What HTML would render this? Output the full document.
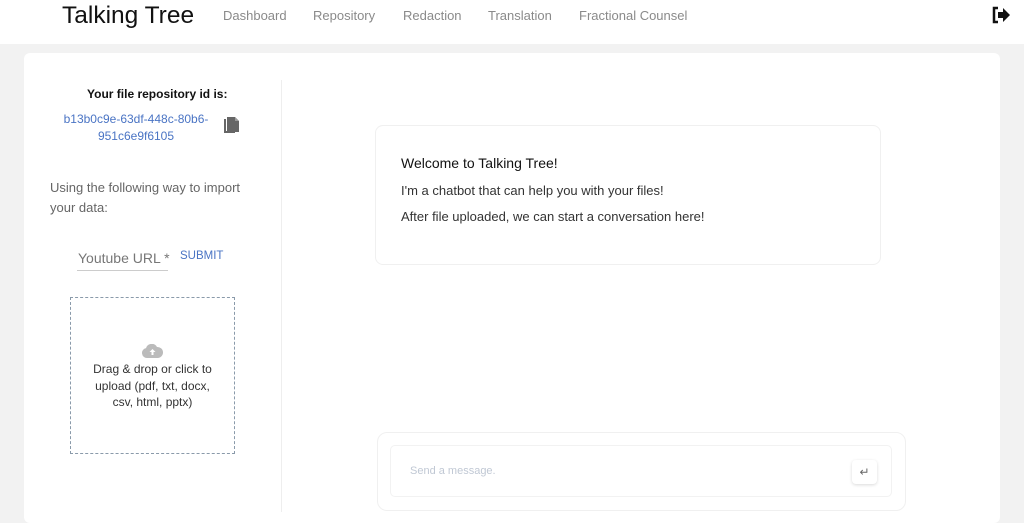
<!DOCTYPE html>
<html><head><style>
*{margin:0;padding:0;box-sizing:border-box}
body{width:1024px;height:512px;overflow:hidden;background:#f2f2f2;font-family:"Liberation Sans",sans-serif;position:relative}
.abs{position:absolute}
.hdr{left:0;top:0;width:1024px;height:44px;background:#fff}
.nav{top:8px;font-size:13px;color:#8a8a8a}
.card{left:24px;top:53px;width:976px;height:470px;background:#fff;border-radius:6px}
</style></head><body>
<div class="abs hdr"></div>
<div class="abs" style="left:62px;top:2px;font-size:24.5px;color:#111">Talking Tree</div>
<div class="abs nav" style="left:223px">Dashboard</div>
<div class="abs nav" style="left:313px">Repository</div>
<div class="abs nav" style="left:403px">Redaction</div>
<div class="abs nav" style="left:488px">Translation</div>
<div class="abs nav" style="left:579px">Fractional Counsel</div>
<svg class="abs" style="left:991px;top:6px" width="20" height="18" viewBox="0 0 20 18"><path d="M7 2H3v14h4" fill="none" stroke="#111" stroke-width="2.5"/><path d="M7 6h5V2l7 7-7 7v-4H7z" fill="#111"/></svg>
<div class="abs card"></div>
<div class="abs" style="left:281px;top:80px;width:1px;height:432px;background:#eee"></div>
<div class="abs" style="left:87px;top:87px;font-size:12px;font-weight:bold;color:#111">Your file repository id is:</div>
<div class="abs" style="left:60px;top:111px;width:152px;text-align:center;font-size:12px;line-height:17px;color:#4a74c4">b13b0c9e-63df-448c-80b6-951c6e9f6105</div>
<svg class="abs" style="left:223px;top:117px" width="17" height="18" viewBox="0 0 17 18"><path d="M1 2h2v12h9v2H1z" fill="#666"/><path d="M4 0h8l4 4v11H4z" fill="#666"/><path d="M12 0v4h4" fill="#999"/></svg>
<div class="abs" style="left:50px;top:178px;width:210px;font-size:13px;line-height:20px;color:#666">Using the following way to import your data:</div>
<div class="abs" style="left:78px;top:250px;font-size:14px;color:#777">Youtube URL *</div>
<div class="abs" style="left:77px;top:270px;width:91px;height:1px;background:#ccc"></div>
<div class="abs" style="left:180px;top:250px;font-size:11.5px;color:#4a74c4">SUBMIT</div>
<div class="abs" style="left:70px;top:297px;width:165px;height:157px;border:1.5px dashed #8a9aaa"></div>
<svg class="abs" style="left:142px;top:344px" width="21" height="14" viewBox="0 0 21 14"><path d="M5 14a5 5 0 0 1-1-9.9A6 6 0 0 1 15 3a5 5 0 0 1 1 11z" fill="#bbb"/><path d="M10.5 5l-3 3h2v3h2V8h2z" fill="#fff"/></svg>
<div class="abs" style="left:85px;top:361px;width:135px;text-align:center;font-size:12px;line-height:16.5px;color:#333">Drag &amp; drop or click to upload (pdf, txt, docx, csv, html, pptx)</div>
<div class="abs" style="left:375px;top:125px;width:506px;height:140px;border:1px solid #f0f0f0;border-radius:8px"></div>
<div class="abs" style="left:401px;top:155px;font-size:14px;color:#111">Welcome to Talking Tree!</div>
<div class="abs" style="left:401px;top:183px;font-size:13px;color:#333">I'm a chatbot that can help you with your files!</div>
<div class="abs" style="left:401px;top:209px;font-size:13px;color:#333">After file uploaded, we can start a conversation here!</div>
<div class="abs" style="left:377px;top:432px;width:529px;height:79px;border:1px solid #f0f0f0;border-radius:10px"></div>
<div class="abs" style="left:390px;top:445px;width:502px;height:52px;border:1px solid #f2f2f2;border-radius:5px"></div>
<div class="abs" style="left:410px;top:465px;font-size:11px;color:#c0c8d4">Send a message.</div>
<div class="abs" style="left:852px;top:460px;width:25px;height:24px;border-radius:4px;box-shadow:0 1px 3px rgba(0,0,0,.15);font-size:12px;color:#666;text-align:center;line-height:24px">↵</div>
</body></html>
